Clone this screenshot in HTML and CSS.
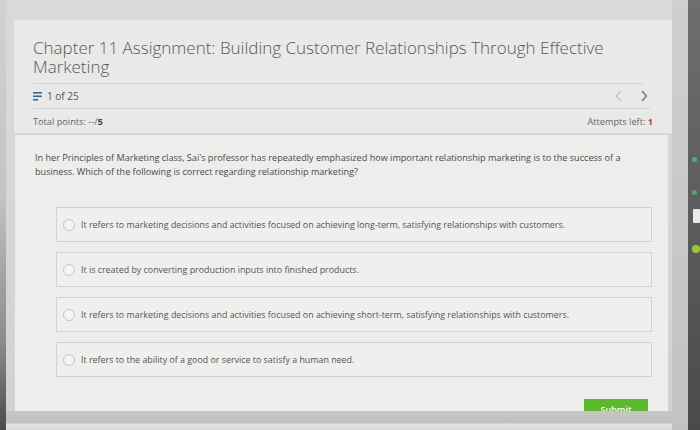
FILE: index.html
```html
<!DOCTYPE html>
<html>
<head>
<meta charset="utf-8">
<link rel="stylesheet" href="styles.css">
</head>
<body>
<div class="frame">
  <div class="left-edge"></div>
  <div class="screen">
    <div class="header-card">
      <h1 class="title">Chapter 11 Assignment: Building Customer Relationships Through Effective Marketing</h1>
      <div class="nav-row">
        <div class="progress">
          <svg class="list-icon" width="10" height="9" viewBox="0 0 10 9"><rect x="0" y="0" width="9" height="1.6" fill="#3a6a9a"/><rect x="0" y="3.5" width="9" height="1.6" fill="#3a6a9a"/><rect x="0" y="7" width="5" height="1.6" fill="#3a6a9a"/></svg>
          <span>1 of 25</span>
        </div>
        <div class="arrows">
          <svg width="8" height="12" viewBox="0 0 8 12"><path d="M6 1 L1.5 6 L6 11" fill="none" stroke="#b4b4b4" stroke-width="1.1"/></svg>
          <svg width="8" height="12" viewBox="0 0 8 12"><path d="M2 1 L6.5 6 L2 11" fill="none" stroke="#6a6a6a" stroke-width="1.2"/></svg>
        </div>
      </div>
      <div class="points-row">
        <span>Total points: --/<b>5</b></span>
        <span>Attempts left: <b class="red">1</b></span>
      </div>
    </div>
    <div class="question-card">
      <p class="question">In her Principles of Marketing class, Sai's professor has repeatedly emphasized how important relationship marketing is to the success of a business. Which of the following is correct regarding relationship marketing?</p>
      <div class="options">
        <label class="option"><span class="radio"></span><span>It refers to marketing decisions and activities focused on achieving long-term, satisfying relationships with customers.</span></label>
        <label class="option"><span class="radio"></span><span>It is created by converting production inputs into finished products.</span></label>
        <label class="option"><span class="radio"></span><span>It refers to marketing decisions and activities focused on achieving short-term, satisfying relationships with customers.</span></label>
        <label class="option"><span class="radio"></span><span>It refers to the ability of a good or service to satisfy a human need.</span></label>
      </div>
      <div class="submit-row"><button class="submit">Submit</button></div>
    </div>
    <div class="bottom-bezel"></div>
  </div>
  <div class="gap-strip"></div>
  <div class="rail">
    <span class="dot teal"></span>
    <span class="dot green"></span>
    <span class="chip"></span>
    <span class="dot lime"></span>
  </div>
</div>
</body>
</html>
```
FILE: styles.css
```css
html, body {
  margin: 0;
  padding: 0;
  width: 700px;
  height: 430px;
  overflow: hidden;
  font-family: "Open Sans", "Liberation Sans", sans-serif;
  background: #d6d6d4;
}
.frame {
  display: flex;
  width: 700px;
  height: 430px;
}
.left-edge {
  width: 6px;
  background: linear-gradient(#d2d2d0 0%, #c4c4c2 45%, #8a8a8a 80%, #4a4a4a 100%);
}
.screen {
  width: 666px;
  display: flex;
  flex-direction: column;
  padding-top: 20px;
  background: linear-gradient(#d9d9d7, #d2d2d0);
}
.header-card {
  margin-left: 8px;
  width: 658px;
  height: 113px;
  box-sizing: border-box;
  padding: 18px 22px 0 19px;
  background: #e9e9e7;
  display: flex;
  flex-direction: column;
}
.title {
  margin: 0;
  font-weight: 300;
  font-size: 17px;
  line-height: 19px;
  color: #585858;
  letter-spacing: 0;
  width: 610px;
  height: 45px;
  border-bottom: 1px solid #d4d4d2;
}
.nav-row {
  height: 24px;
  display: flex;
  align-items: center;
  justify-content: space-between;
  border-bottom: 1px solid #d4d4d2;
}
.progress {
  display: flex;
  align-items: center;
  gap: 4px;
  font-size: 10px;
  color: #555;
}
.arrows {
  display: flex;
  gap: 17px;
  padding-right: 2px;
}
.points-row {
  height: 24px;
  display: flex;
  align-items: center;
  justify-content: space-between;
  font-size: 9.2px;
  color: #666;
  margin-right: -3px;
}
.points-row b { color: #444; }
.points-row b.red { color: #c0313f; }
.question-card {
  margin-left: 9px;
  margin-top: 2px;
  width: 653px;
  height: 276px;
  box-sizing: border-box;
  padding: 16px 16px 0 20px;
  background: #ededeb;
  overflow: hidden;
  display: flex;
  flex-direction: column;
}
.question {
  margin: 0;
  font-size: 9.1px;
  line-height: 13.5px;
  color: #4a4a4a;
  width: 600px;
}
.options {
  margin-top: 29px;
  margin-left: 21px;
  display: flex;
  flex-direction: column;
  gap: 10px;
}
.option {
  height: 35px;
  box-sizing: border-box;
  border: 1px solid #d2d2d0;
  background: #efefed;
  display: flex;
  align-items: center;
  padding-left: 6px;
  gap: 6px;
  font-size: 8.9px;
  color: #555;
}
.radio {
  width: 10px;
  height: 10px;
  border: 1px solid #c4c4c4;
  border-radius: 50%;
  background: #f4f4f2;
  flex: none;
}
.submit-row {
  display: flex;
  justify-content: flex-end;
  margin-top: 22px;
  padding-right: 4px;
}
.submit {
  width: 64px;
  height: 20px;
  border: none;
  background: #5cb82c;
  color: #fff;
  font-family: "Open Sans", "Liberation Sans", sans-serif;
  font-size: 9px;
  font-weight: 600;
  padding: 0;
}
.bottom-bezel {
  flex: 1;
  background: linear-gradient(#c6c6c4 0%, #c0c0be 60%, #e2e2e0 70%, #d8d8d6 100%);
}
.gap-strip {
  width: 16px;
  background: linear-gradient(#cfcfcd, #c2c2c0);
}
.rail {
  width: 12px;
  background: linear-gradient(#6e6e6e, #4a4a4a);
  display: flex;
  flex-direction: column;
  align-items: center;
  padding-top: 157px;
  box-sizing: border-box;
}
.dot {
  width: 5px;
  height: 5px;
  border-radius: 50%;
  flex: none;
}
.teal { background: #4aa8b0; }
.green { background: #4aa860; margin-top: 28px; }
.chip { width: 7px; height: 14px; background: #e8e8e8; border-radius: 1px; margin-top: 14px; margin-left: 4px; }
.lime { width: 8px; height: 8px; background: #9cc43a; margin-top: 22px; margin-left: 4px; }
```
